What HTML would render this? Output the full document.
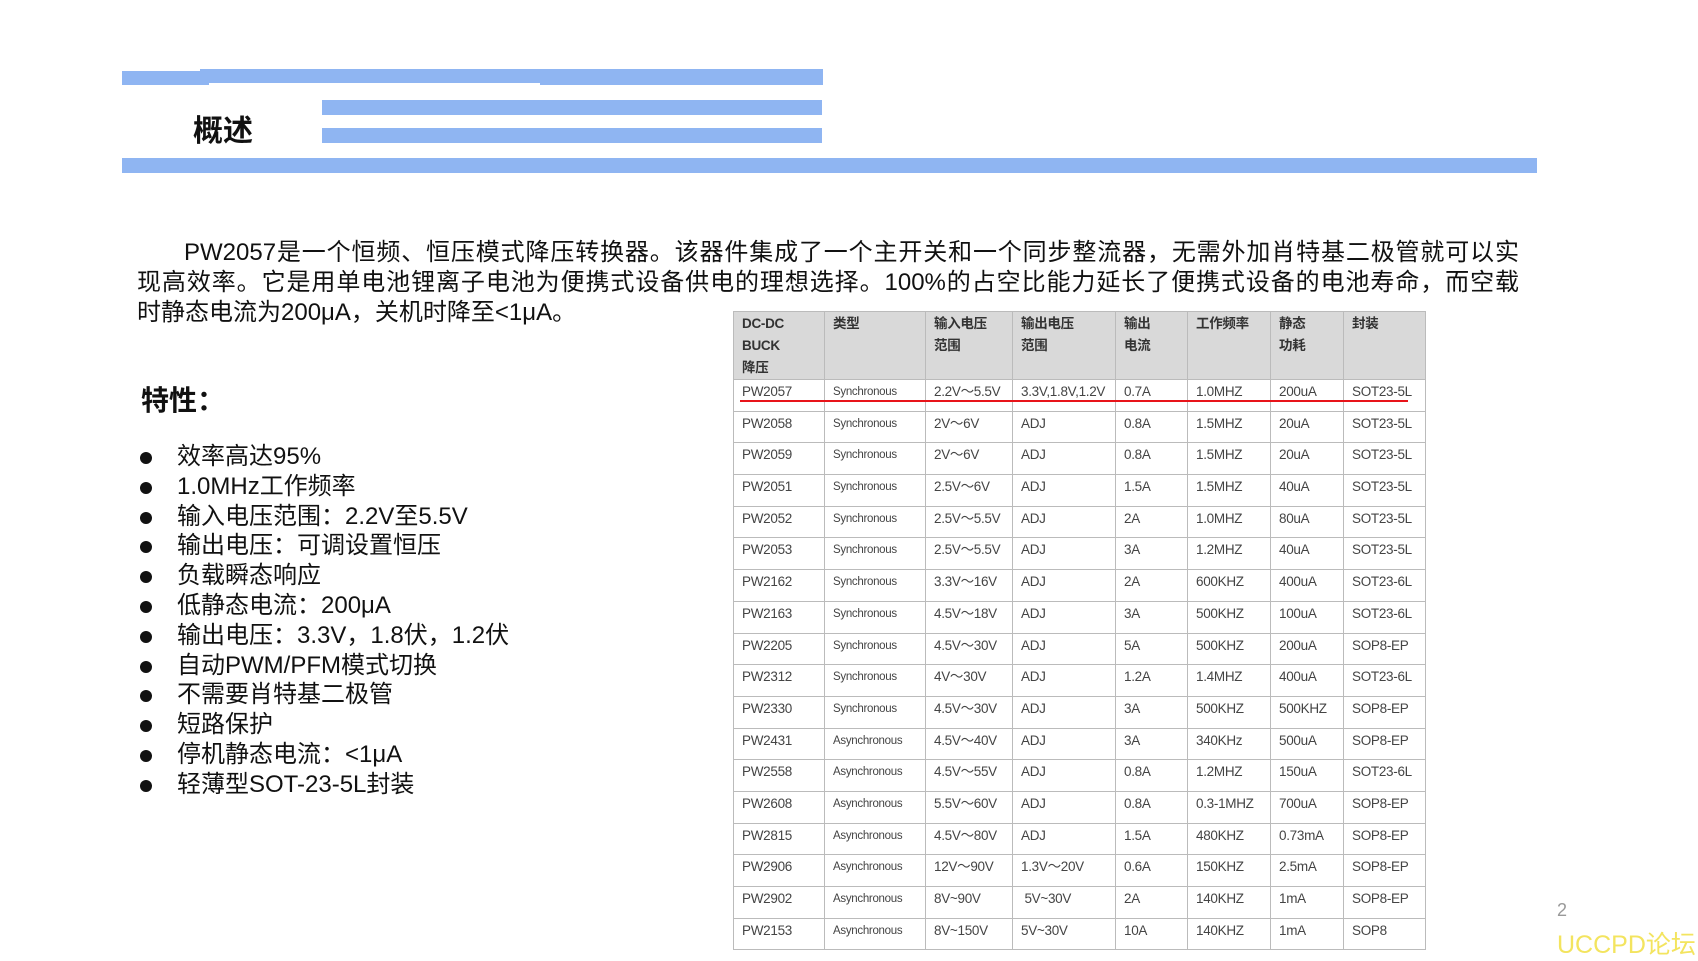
<!DOCTYPE html>
<html><head><meta charset="utf-8"><style>
body{margin:0;width:1698px;height:955px;background:#fff;position:relative;overflow:hidden;font-family:"Liberation Sans","Noto Sans CJK SC",sans-serif;color:#111}
.b{position:absolute;background:#8fb5f2}
.t{position:absolute;white-space:nowrap}
.para{position:absolute;left:137px;top:238px;width:1382px;font-size:24px;line-height:29.8px;color:#111}
.para span{display:block;text-align:justify;text-align-last:justify;white-space:nowrap}
.para span.l3{text-align-last:left}
ul{position:absolute;left:140px;top:442px;margin:0;padding:0;list-style:none;font-size:24px;line-height:29.8px}
ul li{position:relative;padding-left:37px}
ul li:before{content:"";position:absolute;left:0;top:10px;width:12px;height:12px;border-radius:50%;background:#111}
table{position:absolute;left:733px;top:311px;border-collapse:collapse;font-family:"Liberation Sans","Noto Sans CJK SC",sans-serif;font-size:13.5px;color:#444}
td{border:1px solid #bbb;padding:0 0 0 8px;height:30.7px;vertical-align:top;line-height:24px;letter-spacing:-0.3px}
tr.h td{background:#d9d9d9;height:64px;font-weight:bold;font-size:13.5px;line-height:22px;color:#333;padding-top:1px}
td.s{font-size:11.5px}
</style></head><body>
<div class="b" style="left:122px;top:71px;width:87px;height:14px"></div>
<div class="b" style="left:200px;top:69px;width:340px;height:14px"></div>
<div class="b" style="left:287px;top:69px;width:536px;height:14px"></div>
<div class="b" style="left:540px;top:70px;width:283px;height:15px"></div>
<div class="b" style="left:322px;top:100px;width:500px;height:15px"></div>
<div class="b" style="left:322px;top:128px;width:500px;height:15px"></div>
<div class="b" style="left:122px;top:158px;width:1415px;height:15px"></div>
<div class="t" style="left:193px;top:106px;font-size:30px;font-weight:bold">概述</div>
<div class="para"><span style="margin-left:47px">PW2057是一个恒频、恒压模式降压转换器。该器件集成了一个主开关和一个同步整流器，无需外加肖特基二极管就可以实</span><span>现高效率。它是用单电池锂离子电池为便携式设备供电的理想选择。100%的占空比能力延长了便携式设备的电池寿命，而空载</span><span class="l3">时静态电流为200μA，关机时降至&lt;1μA。</span></div>
<div class="t" style="left:141px;top:379px;font-size:28px;font-weight:bold">特性：</div>
<ul>
<li>效率高达95%</li><li>1.0MHz工作频率</li><li>输入电压范围：2.2V至5.5V</li><li>输出电压：可调设置恒压</li><li>负载瞬态响应</li><li>低静态电流：200μA</li><li>输出电压：3.3V，1.8伏，1.2伏</li><li>自动PWM/PFM模式切换</li><li>不需要肖特基二极管</li><li>短路保护</li><li>停机静态电流：&lt;1μA</li><li>轻薄型SOT-23-5L封装</li>
</ul>
<table>
<colgroup><col style="width:91px"><col style="width:101px"><col style="width:87px"><col style="width:103px"><col style="width:72px"><col style="width:83px"><col style="width:73px"><col style="width:82px"></colgroup>
<tr class="h"><td>DC-DC<br>BUCK<br>降压</td><td>类型</td><td>输入电压<br>范围</td><td>输出电压<br>范围</td><td>输出<br>电流</td><td>工作频率</td><td>静态<br>功耗</td><td>封装</td></tr>
<tr><td>PW2057</td><td class="s">Synchronous</td><td>2.2V～5.5V</td><td>3.3V,1.8V,1.2V</td><td>0.7A</td><td>1.0MHZ</td><td>200uA</td><td>SOT23-5L</td></tr>
<tr><td>PW2058</td><td class="s">Synchronous</td><td>2V～6V</td><td>ADJ</td><td>0.8A</td><td>1.5MHZ</td><td>20uA</td><td>SOT23-5L</td></tr>
<tr><td>PW2059</td><td class="s">Synchronous</td><td>2V～6V</td><td>ADJ</td><td>0.8A</td><td>1.5MHZ</td><td>20uA</td><td>SOT23-5L</td></tr>
<tr><td>PW2051</td><td class="s">Synchronous</td><td>2.5V～6V</td><td>ADJ</td><td>1.5A</td><td>1.5MHZ</td><td>40uA</td><td>SOT23-5L</td></tr>
<tr><td>PW2052</td><td class="s">Synchronous</td><td>2.5V～5.5V</td><td>ADJ</td><td>2A</td><td>1.0MHZ</td><td>80uA</td><td>SOT23-5L</td></tr>
<tr><td>PW2053</td><td class="s">Synchronous</td><td>2.5V～5.5V</td><td>ADJ</td><td>3A</td><td>1.2MHZ</td><td>40uA</td><td>SOT23-5L</td></tr>
<tr><td>PW2162</td><td class="s">Synchronous</td><td>3.3V～16V</td><td>ADJ</td><td>2A</td><td>600KHZ</td><td>400uA</td><td>SOT23-6L</td></tr>
<tr><td>PW2163</td><td class="s">Synchronous</td><td>4.5V～18V</td><td>ADJ</td><td>3A</td><td>500KHZ</td><td>100uA</td><td>SOT23-6L</td></tr>
<tr><td>PW2205</td><td class="s">Synchronous</td><td>4.5V～30V</td><td>ADJ</td><td>5A</td><td>500KHZ</td><td>200uA</td><td>SOP8-EP</td></tr>
<tr><td>PW2312</td><td class="s">Synchronous</td><td>4V～30V</td><td>ADJ</td><td>1.2A</td><td>1.4MHZ</td><td>400uA</td><td>SOT23-6L</td></tr>
<tr><td>PW2330</td><td class="s">Synchronous</td><td>4.5V～30V</td><td>ADJ</td><td>3A</td><td>500KHZ</td><td>500KHZ</td><td>SOP8-EP</td></tr>
<tr><td>PW2431</td><td class="s">Asynchronous</td><td>4.5V～40V</td><td>ADJ</td><td>3A</td><td>340KHz</td><td>500uA</td><td>SOP8-EP</td></tr>
<tr><td>PW2558</td><td class="s">Asynchronous</td><td>4.5V～55V</td><td>ADJ</td><td>0.8A</td><td>1.2MHZ</td><td>150uA</td><td>SOT23-6L</td></tr>
<tr><td>PW2608</td><td class="s">Asynchronous</td><td>5.5V～60V</td><td>ADJ</td><td>0.8A</td><td>0.3-1MHZ</td><td>700uA</td><td>SOP8-EP</td></tr>
<tr><td>PW2815</td><td class="s">Asynchronous</td><td>4.5V～80V</td><td>ADJ</td><td>1.5A</td><td>480KHZ</td><td>0.73mA</td><td>SOP8-EP</td></tr>
<tr><td>PW2906</td><td class="s">Asynchronous</td><td>12V～90V</td><td>1.3V～20V</td><td>0.6A</td><td>150KHZ</td><td>2.5mA</td><td>SOP8-EP</td></tr>
<tr><td>PW2902</td><td class="s">Asynchronous</td><td>8V~90V</td><td>&nbsp;5V~30V</td><td>2A</td><td>140KHZ</td><td>1mA</td><td>SOP8-EP</td></tr>
<tr><td>PW2153</td><td class="s">Asynchronous</td><td>8V~150V</td><td>5V~30V</td><td>10A</td><td>140KHZ</td><td>1mA</td><td>SOP8</td></tr>
</table>
<div style="position:absolute;left:740px;top:400px;width:668px;height:2px;background:#e8141a"></div>
<div class="t" style="left:1557px;top:900px;font-size:18px;color:#999">2</div>
<div class="t" style="left:1557px;top:925px;font-size:25px;color:#f3e45f">UCCPD论坛</div>
</body></html>
